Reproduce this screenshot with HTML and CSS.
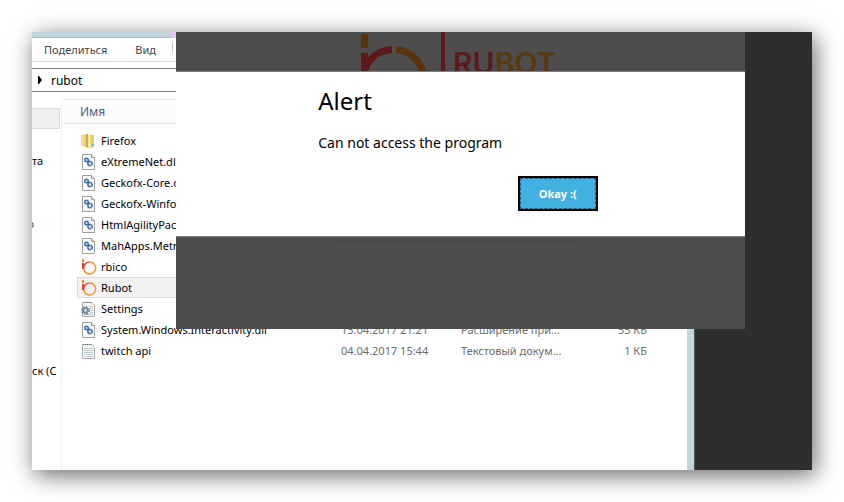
FILE: index.html
```html
<!DOCTYPE html>
<html lang="ru">
<head>
    <meta charset="UTF-8">
    <meta name="viewport" content="width=device-width, initial-scale=1.0">
    <title>rubot</title>
    <link rel="stylesheet" href="styles.css">
</head>
<body>

    <!-- shared icons -->
    <svg class="icon-defs" aria-hidden="true">
        <symbol id="icon-folder" viewBox="0 0 16 16">
            <path d="M0 2l5-1v13l-5-1z" fill="#ecd478"/>
            <path d="M1 2h1v11H1z" fill="#f7eab0"/>
            <path d="M5 1h2v14l-2-1z" fill="#d0ae42"/>
            <path d="M7 2l4-1v14H7z" fill="#f3e093"/>
            <path d="M8 3h1v11H8z" fill="#fbf4cf"/>
            <path d="M10 2h3v12l-3 1z" fill="#e6cb66"/>
            <path d="M11 11h1v2h-1z" fill="#4ba3d8"/>
        </symbol>
        <symbol id="icon-dll" viewBox="0 0 16 16">
            <path d="M1.500.500h9l3 3v12h-12z" fill="#fafafa" stroke="#a0a0a0"/>
            <path d="M10.500.500v3h3" fill="#dddddd" stroke="#a0a0a0"/>
            <circle cx="5.500" cy="6" r="1.800" fill="#dcebf7" stroke="#3a6fa6" stroke-width="1.400"/>
            <circle cx="9" cy="9.500" r="2.200" fill="#dcebf7" stroke="#2f659c" stroke-width="1.600" stroke-dasharray="1.700 .300"/>
            <path d="M7 7l1 1" stroke="#2f659c" stroke-width="1.500"/>
        </symbol>
        <symbol id="icon-rubot" viewBox="0 0 16 16">
            <path d="M1 0h2v3H1z" fill="#f0852d"/>
            <path d="M1 4h2v6H1z" fill="#e03c3c"/>
            <path d="M8.500 3a6 6 0 0 0-5.800 7" fill="none" stroke="#e5483c" stroke-width="1.600"/>
            <path d="M9 3a6 6 0 1 1-6.300 7" fill="none" stroke="#f39a35" stroke-width="1.600"/>
        </symbol>
        <symbol id="icon-text" viewBox="0 0 16 16">
            <path d="M1.500 1.500h9l3 3v11h-12z" fill="#f8f8f8" stroke="#a9a9a9"/>
            <path d="M2 1.500h9" stroke="#777777" stroke-dasharray="1 1"/>
            <path d="M3 5.500h9M3 7.500h9M3 9.500h9M3 11.500h9M3 13.500h9" stroke="#b9cbd4"/>
        </symbol>
        <symbol id="icon-settings" viewBox="0 0 16 16">
            <path d="M1.500 1.500h9l3 3v11h-12z" fill="#f8f8f8" stroke="#a9a9a9"/>
            <path d="M2 1.500h9" stroke="#777777" stroke-dasharray="1 1"/>
            <path d="M8 5.500h4M9 7.500h3M9 9.500h3M9 11.500h3M3 13.500h9" stroke="#c8c8c8"/>
            <circle cx="4.500" cy="9.500" r="3.700" fill="none" stroke="#5f7b92" stroke-width="1.500" stroke-dasharray="1.500 1.400"/>
            <circle cx="4.500" cy="9.500" r="2.300" fill="#dce6ee" stroke="#6f8ba2" stroke-width="1.800"/>
        </symbol>
    </svg>

    <div class="desktop">
        <div class="explorer">
            <div class="titlebar"><span class="titlebar-accent"></span></div>
            <nav class="ribbon">
                <a href="#">Поделиться</a>
                <a href="#">Вид</a>
                <span class="ribbon-separator"></span>
            </nav>
            <div class="address">
                <svg class="address-arrow" viewBox="0 0 4 8"><path d="M0 0h1l3 4-3 4H0z"/></svg>
                <span>rubot</span>
            </div>
            <div class="content">
                <ul class="sidebar">
                    <li class="selected"></li>
                    <li class="item-mail">та</li>
                    <li class="item-video">о</li>
                    <li class="item-disk">ск (C</li>
                </ul>
                <table class="files">
                    <colgroup>
                        <col class="col-name">
                        <col class="col-date">
                        <col class="col-type">
                        <col class="col-size">
                        <col>
                    </colgroup>
                    <thead>
                        <tr><th scope="col" colspan="5">Имя</th></tr>
                    </thead>
                    <tbody>
                        <tr><td><div class="file"><svg><use href="#icon-folder"/></svg>Firefox</div></td></tr>
                        <tr><td><div class="file"><svg><use href="#icon-dll"/></svg>eXtremeNet.dll</div></td></tr>
                        <tr><td><div class="file"><svg><use href="#icon-dll"/></svg>Geckofx-Core.dll</div></td></tr>
                        <tr><td><div class="file"><svg><use href="#icon-dll"/></svg>Geckofx-Winforms.dll</div></td></tr>
                        <tr><td><div class="file"><svg><use href="#icon-dll"/></svg>HtmlAgilityPack.dll</div></td></tr>
                        <tr><td><div class="file"><svg><use href="#icon-dll"/></svg>MahApps.Metro.dll</div></td></tr>
                        <tr><td><div class="file"><svg><use href="#icon-rubot"/></svg>rbico</div></td></tr>
                        <tr><td><div class="file selected"><svg><use href="#icon-rubot"/></svg>Rubot</div></td></tr>
                        <tr><td><div class="file"><svg><use href="#icon-settings"/></svg>Settings</div></td></tr>
                        <tr>
                            <td><div class="file"><svg><use href="#icon-dll"/></svg>System.Windows.Interactivity.dll</div></td>
                            <td>13.04.2017 21:21</td>
                            <td>Расширение при...</td>
                            <td class="size">55 КБ</td>
                        </tr>
                        <tr>
                            <td><div class="file"><svg><use href="#icon-text"/></svg>twitch api</div></td>
                            <td>04.04.2017 15:44</td>
                            <td>Текстовый докум...</td>
                            <td class="size">1 КБ</td>
                        </tr>
                    </tbody>
                </table>
            </div>
        </div>

        <div class="app-window">
            <div class="app-logo">
                <svg class="logo-mark" viewBox="0 0 84 39">
                    <path d="M0 2h7v14H0z" fill="#59330b"/>
                    <path d="M0 21h7v18H0z" fill="#5b1919"/>
                    <path d="M3.500 39A29.500 29.500 0 0 1 31 17.500" fill="none" stroke="#5b1919" stroke-width="7"/>
                    <path d="M35 17.500A29.500 29.500 0 0 1 62.500 46" fill="none" stroke="#59330b" stroke-width="7"/>
                    <path d="M80 0h4v39h-4z" fill="#5b1919"/>
                </svg>
                <span class="logo-text">RU<span class="logo-bot">BOT</span></span>
            </div>
            <div class="alert" role="alertdialog" aria-labelledby="alertTitle" aria-describedby="alertMessage">
                <h2 id="alertTitle">Alert</h2>
                <p id="alertMessage">Can not access the program</p>
                <button type="button"><span>Okay :(</span></button>
            </div>
            <div class="app-footer"><div class="app-field"></div></div>
        </div>
    </div>

</body>
</html>
```

FILE: styles.css
```css
* {
    box-sizing: border-box;
}

body {
    margin: 0;
    padding: 32px;
    min-height: 100vh;
    display: flex;
    background-color: #ffffff;
    font-family: "Noto Sans", "Open Sans", sans-serif;
    font-size: 11px;
    color: #000000;
}

.icon-defs {
    position: absolute;
    width: 0;
    height: 0;
}

.desktop {
    position: relative;
    flex: 1;
    display: flex;
    background-color: #2e2e2e;
    box-shadow: 3px 5px 22px rgba(0, 0, 0, 0.6);
}

.explorer {
    flex: 1;
    display: flex;
    flex-direction: column;
    margin-right: 117px;
    background-color: #ffffff;
    border-right: 1px solid #4d595e;
    box-shadow: inset -7px 0 0 #c2d5da;
    padding-right: 7px;
    overflow: hidden;
}

.titlebar {
    height: 6px;
    background-color: #c2d5da;
    border-bottom: 1px solid #a9bcc1;
    padding-left: 140px;
    display: flex;
}

.titlebar-accent {
    width: 4px;
    height: 6px;
    background-color: #e6c3fa;
}

.ribbon {
    height: 24px;
    display: flex;
    align-items: center;
    gap: 28px;
    padding-left: 12px;
    border-bottom: 1px solid #d9dadb;
}

.ribbon a {
    color: #444444;
    text-decoration: none;
    line-height: 24px;
}

.ribbon-separator {
    width: 1px;
    height: 18px;
    margin-left: -12px;
    align-self: flex-start;
    background: linear-gradient(#ffffff, #b0b0b0, #ffffff);
}

.address {
    height: 24px;
    margin-top: 6px;
    display: flex;
    align-items: center;
    gap: 9px;
    padding-left: 6px;
    border-top: 1px solid #7a7a7a;
    border-bottom: 1px solid #7a7a7a;
    font-size: 12px;
}

.address-arrow {
    width: 4px;
    height: 8px;
}

.content {
    flex: 1;
    display: flex;
    padding-top: 7px;
}

.sidebar {
    width: 30px;
    margin: 0;
    padding: 9px 0 0;
    list-style: none;
    border-right: 1px solid #f2f2f2;
    flex-shrink: 0;
}

.sidebar li {
    height: 21px;
    line-height: 21px;
    white-space: nowrap;
    overflow: hidden;
}

.sidebar .selected {
    width: 28px;
    background-color: #f0f0f0;
    border: 1px solid #dadada;
    border-left: 0;
}

.sidebar .item-mail {
    margin-top: 21px;
}

.sidebar .item-video {
    width: 2px;
    display: flex;
    justify-content: flex-end;
    margin-top: 42px;
    color: #1c4a8c;
}

.sidebar .item-disk {
    margin-top: 126px;
}

.files {
    width: 100%;
    align-self: flex-start;
    margin-left: 1px;
    table-layout: fixed;
    border-collapse: separate;
    border-spacing: 0;
}

.col-name {
    width: 278px;
}

.col-date {
    width: 120px;
}

.col-type {
    width: 120px;
}

.col-size {
    width: 66px;
}

.files th {
    height: 25px;
    padding: 0 0 0 17px;
    text-align: left;
    font-size: 12px;
    font-weight: normal;
    color: #4c607a;
    background-color: #fcfcfc;
    border-top: 1px solid #e5e5e5;
    border-bottom: 1px solid #e0e0e0;
}

.files tbody::before {
    content: "";
    display: block;
    height: 6px;
}

.files td {
    height: 21px;
    padding: 0;
    white-space: nowrap;
    color: #6d6d6d;
}

.files td:first-child {
    padding-left: 14px;
}

.files .size {
    text-align: right;
}

.file {
    height: 21px;
    display: flex;
    align-items: center;
    gap: 4px;
    padding-left: 3px;
    border: 1px solid transparent;
    color: #000000;
}

.file svg {
    width: 16px;
    height: 16px;
}

.file.selected {
    background-color: #f2f2f2;
    border-color: #dadada;
}

.app-window {
    position: absolute;
    top: 0;
    left: 144px;
    right: 67px;
    background-color: #4d4d4d;
}

.app-logo {
    height: 39px;
    display: flex;
    gap: 8px;
    padding-left: 185px;
    overflow: hidden;
}

.logo-mark {
    width: 84px;
    height: 39px;
}

.logo-text {
    padding-top: 14px;
    font-family: Inter, sans-serif;
    font-size: 30px;
    font-weight: 600;
    line-height: 34px;
    color: #5b1919;
}

.logo-bot {
    color: #59390f;
}

.alert {
    display: flex;
    flex-direction: column;
    padding: 11px 25% 25px;
    background-color: #ffffff;
    border-top: 1px solid #808080;
    border-bottom: 1px solid #808080;
}

.alert h2 {
    margin: 0;
    font-size: 24px;
    font-weight: normal;
    line-height: 36px;
}

.alert p {
    margin: 13px 0 22px;
    font-size: 14px;
    line-height: 22px;
}

.alert button {
    align-self: flex-end;
    width: 80px;
    height: 35px;
    margin-right: 5px;
    padding: 0;
    display: flex;
    font-family: inherit;
    font-size: 11px;
    font-weight: bold;
    color: #ffffff;
    background-color: #41b1e1;
    border: 2px solid #000000;
    cursor: pointer;
}

.alert button span {
    flex: 1;
    align-self: stretch;
    line-height: 30px;
    border: 1px dashed #1f5a74;
}

.alert button:hover {
    background-color: #5dbfe8;
}

.app-footer {
    height: 92px;
    padding: 0 168px 0 162px;
}

.app-field {
    height: 5px;
    border: 1px solid #434343;
    border-top: 0;
    border-radius: 0 0 4px 4px;
}
```
